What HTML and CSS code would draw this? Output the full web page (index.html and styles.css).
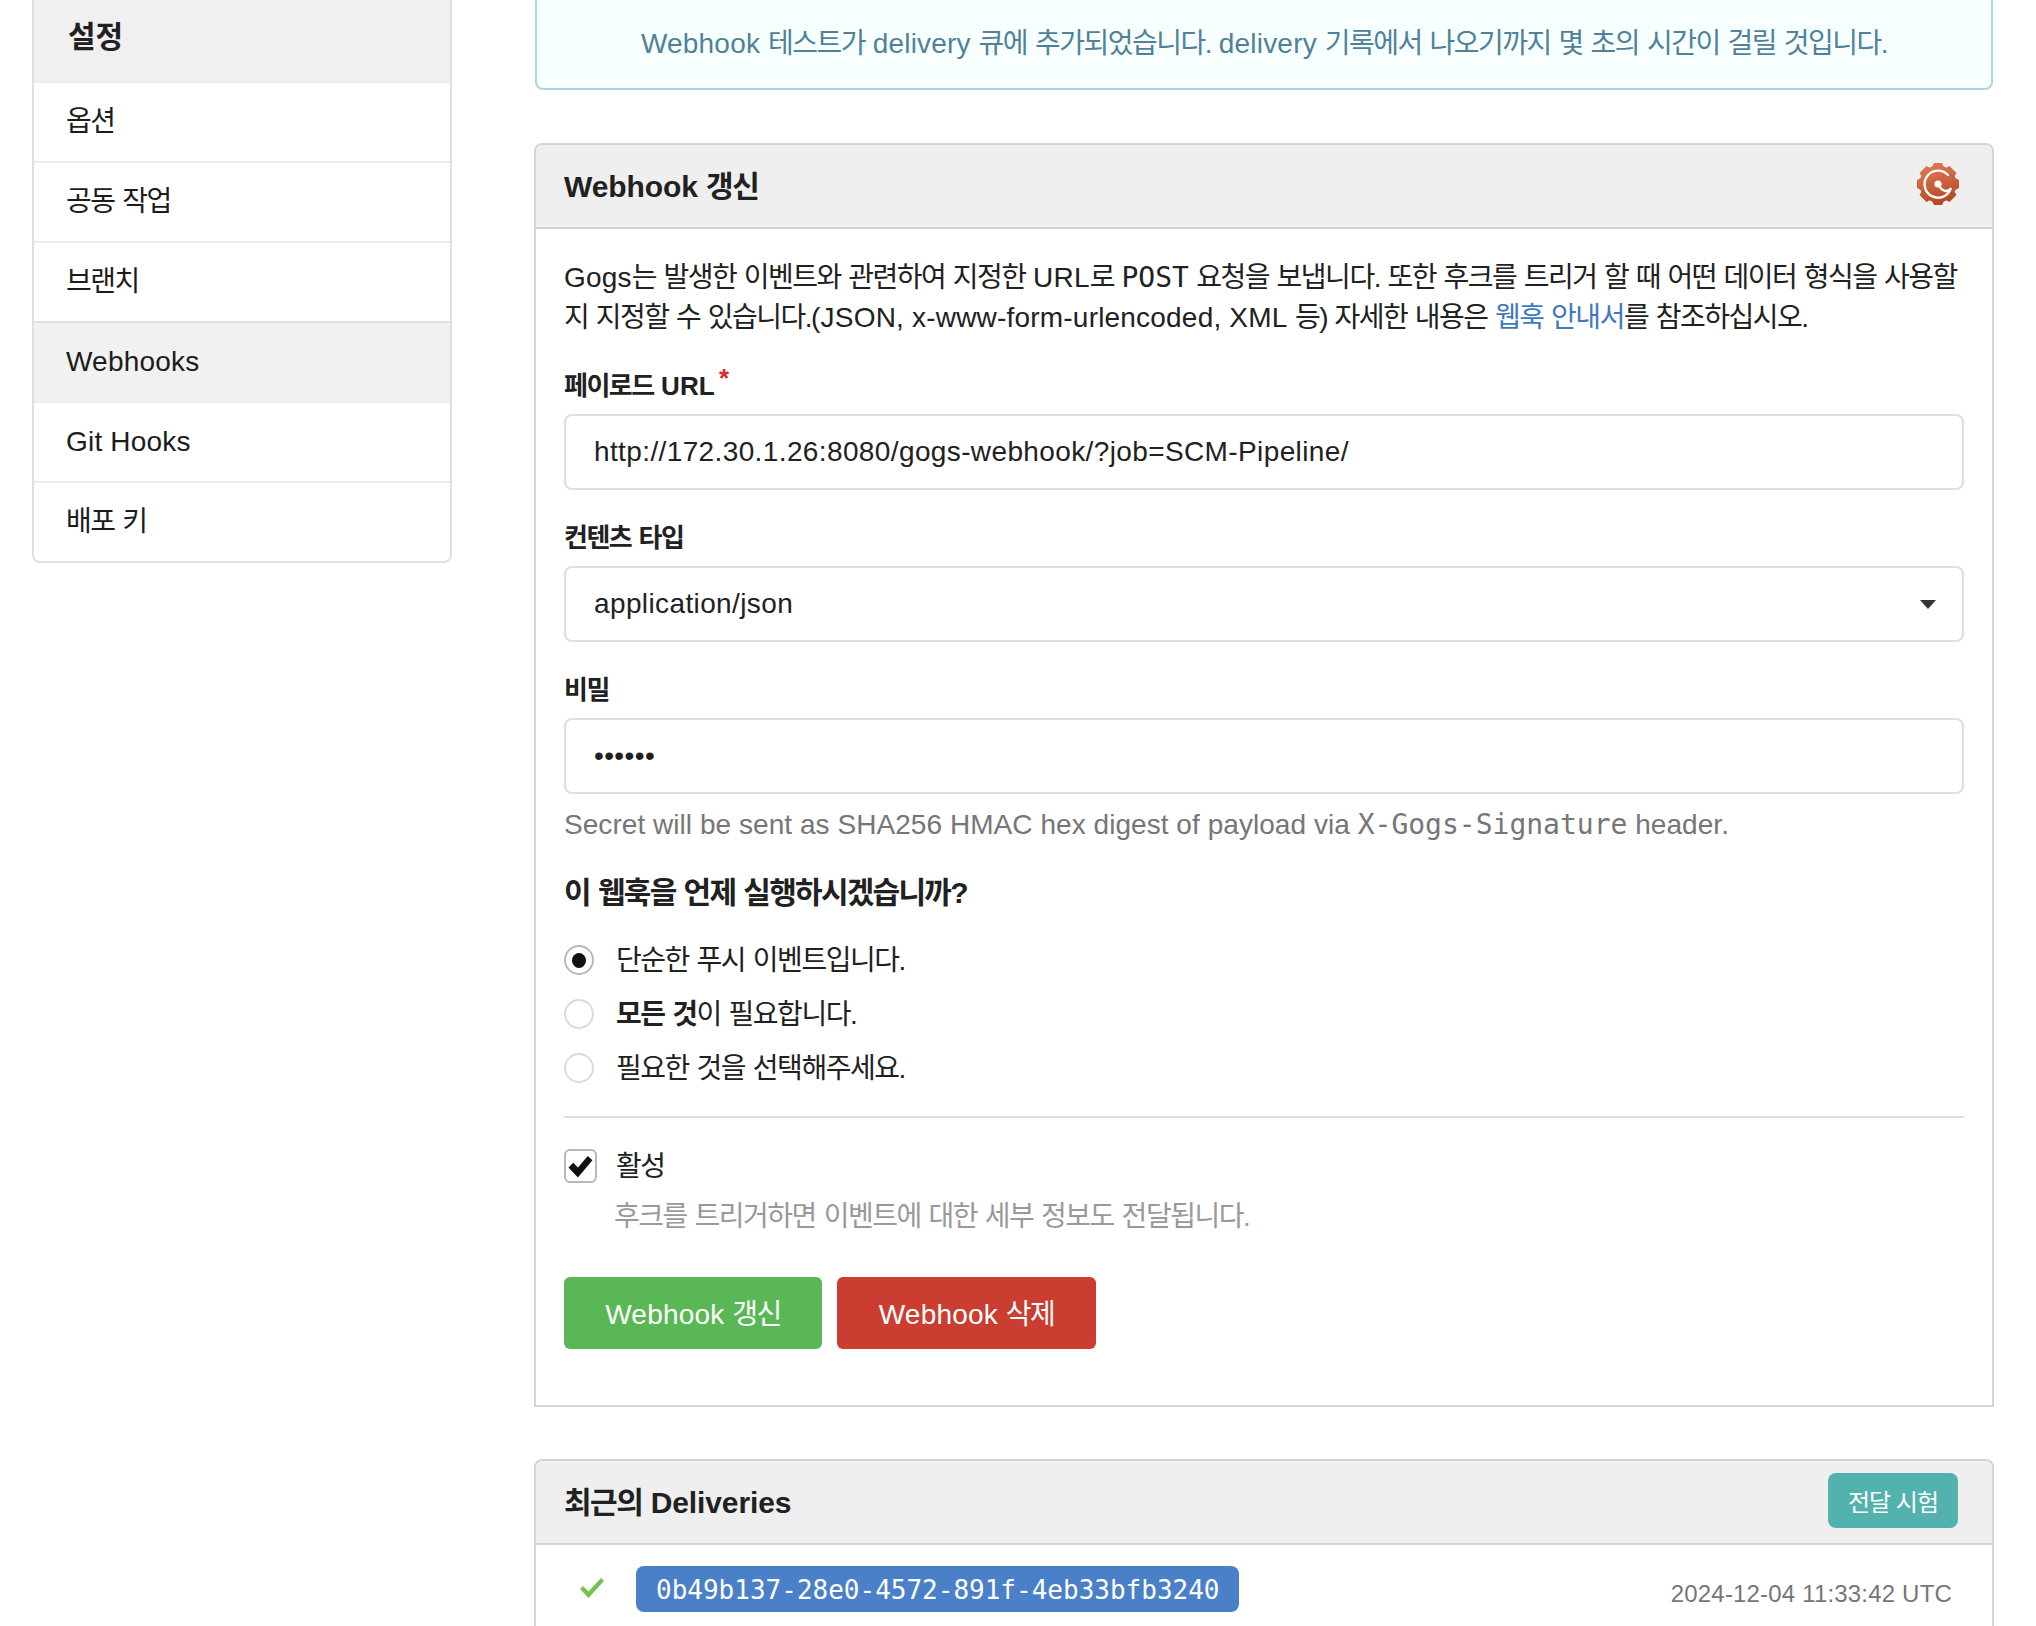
FILE: index.html
```html
<!DOCTYPE html>
<html lang="ko">
<head>
  <meta charset="UTF-8" />
  <title>Webhook 갱신</title>
  <link rel="stylesheet" href="styles.css">
</head>
<body>
  <div class="page">
    <div class="sidebar">
      <div class="side-head">설정</div>
      <a class="side-item">옵션</a>
      <a class="side-item">공동 작업</a>
      <a class="side-item">브랜치</a>
      <a class="side-item active en">Webhooks</a>
      <a class="side-item en">Git Hooks</a>
      <a class="side-item">배포 키</a>
    </div>

    <div class="main">
      <div class="alert"><span class="en">Webhook</span> 테스트가 <span class="en">delivery</span> 큐에 추가되었습니다. <span class="en">delivery</span> 기록에서 나오기까지 몇 초의 시간이 걸릴 것입니다.</div>

      <div class="box update-box">
        <div class="box-head">
          <span class="box-title"><span class="en">Webhook</span> 갱신</span>
          <svg class="logo" viewBox="0 0 44 44" width="44" height="44">
            <defs>
              <linearGradient id="gearFill" gradientUnits="userSpaceOnUse" x1="14" y1="0" x2="26" y2="44">
                <stop offset="0" stop-color="#e27a58"/>
                <stop offset="1" stop-color="#b2451f"/>
              </linearGradient>
            </defs>
            <g fill="url(#gearFill)">
              <circle cx="22" cy="22" r="18.5"/>
              <path d="M16 5 L18 1 H26 L28 5 Z"/>
              <path d="M16 39 L18 43 H26 L28 39 Z"/>
              <path d="M5 16 L1 18 V26 L5 28 Z"/>
              <path d="M39 16 L43 18 V26 L39 28 Z"/>
              <path d="M6 15 L3.5 11 L10.5 4 L15 6.5 Z"/>
              <path d="M38 15 L40.5 11 L33.5 4 L29 6.5 Z"/>
              <path d="M6 29 L3.5 33 L10.5 40 L15 37.5 Z"/>
              <path d="M38 29 L40.5 33 L33.5 40 L29 37.5 Z"/>
            </g>
            <path fill="none" stroke="#fff" stroke-width="2.4" stroke-linecap="round" d="M32 13 A13.5 13.5 0 1 0 35 26 C32 31 26 30 22 22"/>
            <circle cx="22" cy="22" r="3.6" fill="#fff"/>
          </svg>
        </div>
        <form class="form">
          <p class="desc"><span class="en">Gogs</span>는 발생한 이벤트와 관련하여 지정한 <span class="en">URL</span>로 <code>POST</code> 요청을 보냅니다. 또한 후크를 트리거 할 때 어떤 데이터 형식을 사용할<br>지 지정할 수 있습니다.<span class="en">(JSON, x-www-form-urlencoded, XML</span> 등) 자세한 내용은 <a class="link">웹훅 안내서</a>를 참조하십시오.</p>

          <label class="field-label first">페이로드 <span class="en">URL</span><span class="req">*</span></label>
          <input class="text-input" type="text" value="http://172.30.1.26:8080/gogs-webhook/?job=SCM-Pipeline/">

          <label class="field-label">컨텐츠 타입</label>
          <div class="select">
            <span>application/json</span>
            <i class="caret"></i>
          </div>

          <label class="field-label">비밀</label>
          <input class="text-input" type="password" value="secret">
          <p class="help">Secret will be sent as SHA256 HMAC hex digest of payload via <code>X-Gogs-Signature</code> header.</p>

          <h4 class="question">이 웹훅을 언제 실행하시겠습니까?</h4>
          <div class="radios">
            <div class="radio"><i class="radio-mark checked"></i><span class="radio-text">단순한 푸시 이벤트입니다.</span></div>
            <div class="radio"><i class="radio-mark"></i><span class="radio-text"><b>모든 것</b>이 필요합니다.</span></div>
            <div class="radio"><i class="radio-mark"></i><span class="radio-text">필요한 것을 선택해주세요.</span></div>
          </div>

          <div class="divider"></div>

          <div class="active-row">
            <span class="check-mark">
              <svg viewBox="0 0 24 24" width="25" height="25"><path d="M0.5 13 L5 8.5 L9.5 13 L19 2 L23.5 6 L9.5 22.5 Z" fill="#111"/></svg>
            </span>
            활성
          </div>
          <p class="active-help">후크를 트리거하면 이벤트에 대한 세부 정보도 전달됩니다.</p>

          <div class="buttons">
            <button class="btn green" type="button"><span class="en">Webhook</span> 갱신</button>
            <button class="btn red" type="button"><span class="en">Webhook</span> 삭제</button>
          </div>
        </form>
      </div>

      <div class="box deliveries">
        <div class="box-head">
          <span class="box-title">최근의 <span class="en">Deliveries</span></span>
          <button class="test-btn" type="button">전달 시험</button>
        </div>
        <div class="delivery-row">
          <svg class="ok-icon" viewBox="0 0 26 22" width="26" height="22"><path d="M1 12 L4 9 L9.5 14.5 L22 1 L25 4 L9.5 21 Z" fill="#76c054"/></svg>
          <span class="uuid">0b49b137-28e0-4572-891f-4eb33bfb3240</span>
          <span class="date">2024-12-04 11:33:42 UTC</span>
        </div>
      </div>
    </div>
  </div>
</body>
</html>
```

FILE: styles.css
```css
html, body {
  margin: 0;
  padding: 0;
  height: 1626px;
  overflow: hidden;
  background: #fff;
  color: #212121;
  font-family: "Liberation Sans", "Noto Sans CJK KR", sans-serif;
  font-size: 28px;
  line-height: 40px;
  /* the hangul runs a bit narrower than Noto's, latin text resets this */
  letter-spacing: -1.5px;
  word-spacing: 1.5px;
}

.en {
  letter-spacing: 0.2px;
  word-spacing: 0;
}

code {
  font-family: "DejaVu Sans Mono", monospace;
  font-size: 28px;
  letter-spacing: 0;
}

.page {
  display: flex;
  align-items: flex-start;
  padding-left: 32px;
}

/* sidebar */
.sidebar {
  width: 420px;
  box-sizing: border-box;
  border: 2px solid #dfdfe0;
  border-top: 0;
  border-radius: 0 0 8px 8px;
  flex-shrink: 0;
}

.side-head {
  height: 81px;
  box-sizing: border-box;
  padding: 17px 34px 0;
  background: #f0f0f0;
  font-weight: bold;
  font-size: 30px;
  letter-spacing: 0;
}

.side-item {
  display: flex;
  align-items: center;
  height: 80px;
  box-sizing: border-box;
  padding-left: 32px;
  border-top: 2px solid #ededed;
  color: #1c1c1c;
}

.side-item.active {
  background: #f1f1f1;
  border-top-color: #e0e0e0;
}

/* main column */
.main {
  width: 1460px;
  margin-left: 82px;
}

.alert {
  height: 90px;
  box-sizing: border-box;
  margin: 0 1px 53px;
  padding-top: 24px;
  background: #f8ffff;
  border: 2px solid #b0d5df;
  border-top: 0;
  border-radius: 0 0 8px 8px;
  color: #4f8299;
  text-align: center;
}

.box {
  border: 2px solid #d4d4d5;
  border-radius: 8px 8px 0 0;
}

.update-box {
  height: 1264px;
  box-sizing: border-box;
}

.deliveries {
  margin-top: 52px;
  border-bottom: 0;
}

.box-head {
  display: flex;
  align-items: center;
  justify-content: space-between;
  height: 84px;
  box-sizing: border-box;
  padding: 0 32px 0 28px;
  background: #efefef;
  border-bottom: 2px solid #d4d4d5;
  border-radius: 6px 6px 0 0;
}

.box-title {
  padding-top: 2px;
  font-weight: bold;
  font-size: 30px;
}

.box-title .en {
  letter-spacing: -0.1px;
}

.logo {
  margin-top: -4px;
}

.form {
  padding: 29px 28px 28px;
}

.desc {
  margin: 0;
  word-spacing: 1.2px;
}

.link {
  color: #4078c0;
}

.field-label {
  display: block;
  margin: 30px 0 10px;
  font-size: 26px;
  font-weight: bold;
  line-height: 36px;
}

.field-label.first {
  margin-top: 27px;
}

.req {
  color: #db2828;
  margin-left: 4px;
  vertical-align: 8px;
  line-height: 1;
}

.text-input,
.select {
  display: flex;
  align-items: center;
  justify-content: space-between;
  width: 100%;
  height: 76px;
  box-sizing: border-box;
  padding: 0 28px;
  border: 2px solid #dedede;
  border-radius: 8px;
  background: #fff;
  color: #212121;
  font-family: inherit;
  font-size: 28px;
  letter-spacing: 0.38px;
  word-spacing: 0;
  outline: none;
}

.select {
  padding-right: 26px;
}

.caret {
  width: 0;
  height: 0;
  border-left: 8px solid transparent;
  border-right: 8px solid transparent;
  border-top: 9px solid #333;
}

.help {
  margin: 11px 0 0;
  color: #767676;
  letter-spacing: 0.05px;
  word-spacing: 0;
}

.question {
  margin: 28px 0 0;
  font-size: 30px;
  line-height: 40px;
  letter-spacing: -1.75px;
}

.radios {
  margin-top: 27px;
  display: flex;
  flex-direction: column;
  gap: 14px;
}

.radio {
  display: flex;
  align-items: center;
  height: 40px;
}

.radio-text {
  padding-top: 2px;
}

.radio-mark {
  width: 30px;
  height: 30px;
  box-sizing: border-box;
  margin-right: 22px;
  border: 2px solid #dadada;
  border-radius: 50%;
  display: flex;
  align-items: center;
  justify-content: center;
}

.radio-mark.checked {
  border-color: #b9b9b9;
}

.radio-mark.checked::after {
  content: "";
  width: 14px;
  height: 15px;
  border-radius: 50%;
  background: #111;
}

.divider {
  margin-top: 28px;
  border-top: 2px solid #dedede;
}

.active-row {
  display: flex;
  align-items: center;
  margin-top: 29px;
  height: 40px;
}

.check-mark {
  width: 33px;
  height: 34px;
  box-sizing: border-box;
  margin-right: 19px;
  margin-top: -2px;
  border: 2px solid #b8b8b8;
  border-radius: 6px;
  display: flex;
  align-items: center;
  justify-content: center;
}

.active-help {
  margin: 10px 0 0 50px;
  color: #999;
}

.buttons {
  display: flex;
  gap: 15px;
  margin-top: 40px;
}

.btn {
  height: 72px;
  width: 258px;
  padding: 0 0 2px;
  border: 0;
  border-radius: 6px;
  color: #fff;
  font-family: inherit;
  font-size: 28px;
  letter-spacing: inherit;
  word-spacing: inherit;
}

.green { background: #5ab755; }
.red { background: #ca3d30; width: 259px; }

.test-btn {
  width: 130px;
  height: 55px;
  margin-top: -3px;
  margin-right: 2px;
  border: 0;
  border-radius: 8px;
  background: #53b2ad;
  color: #fff;
  font-family: inherit;
  font-size: 24px;
  letter-spacing: -1px;
}

.delivery-row {
  display: flex;
  align-items: center;
  height: 81px;
  padding: 0 40px 0 43px;
}

.ok-icon {
  flex-shrink: 0;
  margin-right: 31px;
  margin-top: 4px;
}

.uuid {
  background: #4a80c8;
  color: #fff;
  border-radius: 8px;
  height: 46px;
  margin-top: 7px;
  padding: 0 19px 0 20px;
  font-family: "DejaVu Sans Mono", monospace;
  font-size: 26px;
  line-height: 49px;
  letter-spacing: 0;
}

.date {
  margin-left: auto;
  margin-top: 16px;
  color: #767676;
  font-size: 24px;
  letter-spacing: 0.18px;
  word-spacing: 0;
}
```
